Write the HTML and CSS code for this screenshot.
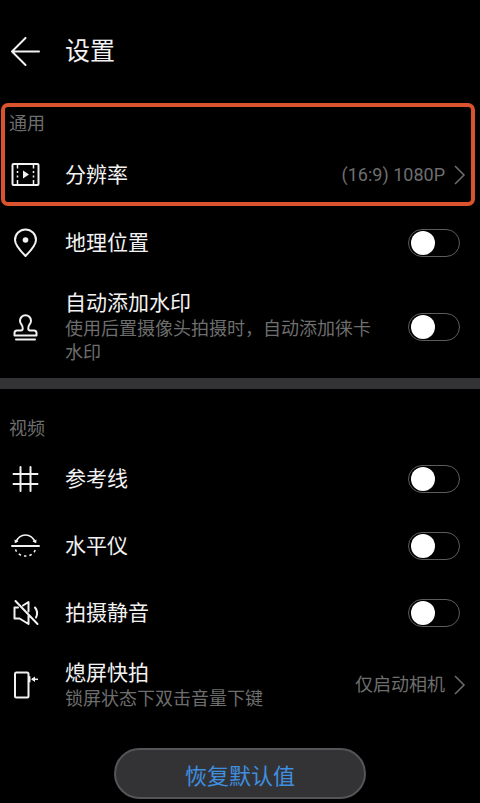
FILE: index.html
```
<!DOCTYPE html>
<html lang="zh-CN">
<head>
    <meta charset="UTF-8">
    <meta name="viewport" content="width=device-width, initial-scale=1.0">
    <title>设置</title>
    <link rel="stylesheet" href="styles.css">
</head>
<body>
    <header class="header">
        <button class="back" type="button" aria-label="返回">
            <svg class="icon" viewBox="0 0 30 30"><path d="M29 14.500H2M15.500 1L2 14.500L15.500 28"/></svg>
        </button>
        <h1>设置</h1>
    </header>

    <main>
        <section>
            <div class="highlight">
                <h2>通用</h2>
                <button class="row" type="button">
                    <svg class="icon" viewBox="0 0 30 30">
                        <rect x="2.500" y="4" width="26" height="21" rx="1"/>
                        <path class="thin" d="M7.500 4.500v4M7.500 11v2M7.500 15.500v2M7.500 20v4.500M23.500 4.500v4M23.500 11v2M23.500 15.500v2M23.500 20v4.500"/>
                        <path class="fill" d="M13 10.500L19 14.500L13 18.500Z"/>
                    </svg>
                    <span class="text"><span class="name">分辨率</span></span>
                    <span class="value">(16:9) 1080P</span>
                    <svg class="chevron" viewBox="0 0 12 20"><path d="M1 1L10 10L1 19"/></svg>
                </button>
            </div>
            <label class="row">
                <svg class="icon" viewBox="0 0 30 30">
                    <path d="M15.500 28C11 23.500 5 17.500 5 12a10.500 10.500 0 0 1 21 0C26 17.500 20 23.500 15.500 28Z"/>
                    <circle class="fill" cx="15.500" cy="12" r="2.800"/>
                </svg>
                <span class="text"><span class="name">地理位置</span></span>
                <input class="switch" type="checkbox">
            </label>
            <label class="row">
                <svg class="icon" viewBox="0 0 30 30">
                    <path d="M4.500 23.500h22V21a2.500 2.500 0 0 0-2.500-2.500h-4c-2 0-2.500-3-.5-6a5.500 5.500 0 1 0-8 0c2 3 1.500 6-.5 6H7A2.500 2.500 0 0 0 4.500 21ZM6 27.500h19"/>
                </svg>
                <span class="text">
                    <span class="name">自动添加水印</span>
                    <span class="hint">使用后置摄像头拍摄时，自动添加徕卡水印</span>
                </span>
                <input class="switch" type="checkbox">
            </label>
        </section>

        <section class="divided">
            <h2>视频</h2>
            <label class="row">
                <svg class="icon" viewBox="0 0 30 30"><path d="M10.500 3v24M20.500 3v24M3.500 10h24M3.500 20h24"/></svg>
                <span class="text"><span class="name">参考线</span></span>
                <input class="switch" type="checkbox">
            </label>
            <label class="row">
                <svg class="icon" viewBox="0 0 30 30">
                    <path d="M2 15h27"/>
                    <path class="thin" d="M6 11C9.500 1.500 21.500 1.500 25 11"/>
                    <path class="fill" d="M4.500 8.500L4.800 12.300L8.500 10.500ZM26.500 8.500L26.200 12.300L22.500 10.500Z"/>
                    <path class="thin dash" d="M5.500 18.500a10.500 9.500 0 0 0 20 0"/>
                </svg>
                <span class="text"><span class="name">水平仪</span></span>
                <input class="switch" type="checkbox">
            </label>
            <label class="row">
                <svg class="icon" viewBox="0 0 30 30">
                    <path d="M5.500 3L27.500 26M8 9.500H4.500v11h5L18.500 26V17M13 7.500L18.500 4v9.500M25 9.500c2.500 3 2.500 7 1 10"/>
                </svg>
                <span class="text"><span class="name">拍摄静音</span></span>
                <input class="switch" type="checkbox">
            </label>
            <button class="row" type="button">
                <svg class="icon" viewBox="0 0 30 30">
                    <rect x="5" y="2.500" width="13.500" height="25" rx="1.500"/>
                    <path d="M19.500 7v4.500"/>
                    <path class="thin" d="M22 9.300h6"/>
                    <path class="fill" d="M21 9.300L25 6.500V12.100Z"/>
                </svg>
                <span class="text">
                    <span class="name">熄屏快拍</span>
                    <span class="hint">锁屏状态下双击音量下键</span>
                </span>
                <span class="value">仅启动相机</span>
                <svg class="chevron" viewBox="0 0 12 20"><path d="M1 1L10 10L1 19"/></svg>
            </button>
        </section>
    </main>

    <button class="reset" type="button">恢复默认值</button>
</body>
</html>
```
FILE: styles.css
```
:root {
    --text-color: #f2f2f2;
    --muted-color: #6e6e6e;
    --surface-color: #333335;
    --highlight-color: #d9532f;
    --link-color: #3f8fe0;
}

* {
    box-sizing: border-box;
}

body {
    margin: 0;
    background: #000;
    color: var(--text-color);
    font-family: Roboto, "Noto Sans CJK SC", sans-serif;
}

button {
    margin: 0;
    padding: 0;
    border: 0;
    background: none;
    color: inherit;
    font: inherit;
    text-align: left;
    cursor: pointer;
}

.header {
    display: flex;
    align-items: center;
    gap: 25px;
    height: 103px;
    padding: 0 10px;
}

.back {
    display: flex;
}

h1 {
    margin: 0;
    font-size: 25px;
    font-weight: 400;
    line-height: 36px;
}

h2 {
    margin: 0;
    padding-left: 9px;
    color: var(--muted-color);
    font-size: 18px;
    font-weight: 400;
    line-height: 24px;
}

.icon {
    flex: none;
    width: 30px;
    height: 30px;
    fill: none;
    stroke: currentColor;
    stroke-width: 2;
    stroke-linecap: round;
    stroke-linejoin: round;
}

.icon .thin {
    stroke-width: 1.5;
    stroke-linecap: butt;
}

.icon .dash {
    stroke-dasharray: 2.5 3;
}

.icon .fill {
    fill: currentColor;
    stroke: none;
}

.row {
    display: flex;
    align-items: center;
    width: 100%;
    min-height: 67px;
    padding: 13px 20px 13px 10px;
}

button.row {
    padding-right: 14px;
}

.text {
    flex: 1;
    margin: 0 24px 0 25px;
}

.name,
.hint {
    display: block;
}

.name {
    font-size: 21px;
    line-height: 28px;
}

.hint {
    color: var(--muted-color);
    font-size: 18px;
    line-height: 24px;
}

.value {
    color: var(--muted-color);
    font-size: 18px;
    line-height: 24px;
}

.chevron {
    flex: none;
    width: 12px;
    height: 20px;
    margin-left: 9px;
    fill: none;
    stroke: var(--muted-color);
    stroke-width: 1.5;
}

.switch {
    flex: none;
    appearance: none;
    width: 52px;
    height: 28px;
    margin: 0;
    padding: 1px 2px;
    border: 1px solid #5c5c5c;
    border-radius: 14px;
    cursor: pointer;
}

.switch::before {
    content: "";
    display: block;
    width: 24px;
    height: 24px;
    border-radius: 50%;
    background: #fff;
}

.switch:checked::before {
    margin-left: auto;
}

/* Framed group around the resolution setting */
.highlight {
    margin: 0 5px 3px 1px;
    padding-top: 5px;
    border: 4px solid var(--highlight-color);
    border-radius: 7px;
}

.highlight h2 {
    padding-left: 4px;
    margin-bottom: 12px;
}

.highlight .row {
    min-height: 54px;
    padding: 12px 5px;
}

.divided {
    padding-top: 28px;
    border-top: 11px solid var(--surface-color);
}

.divided h2 {
    margin-bottom: 4px;
}

.reset {
    display: block;
    width: 252px;
    height: 51px;
    margin: 24px auto 5px;
    border: 2px solid #555557;
    border-radius: 26px;
    background: var(--surface-color);
    color: var(--link-color);
    font-size: 22px;
    text-align: center;
}
```
